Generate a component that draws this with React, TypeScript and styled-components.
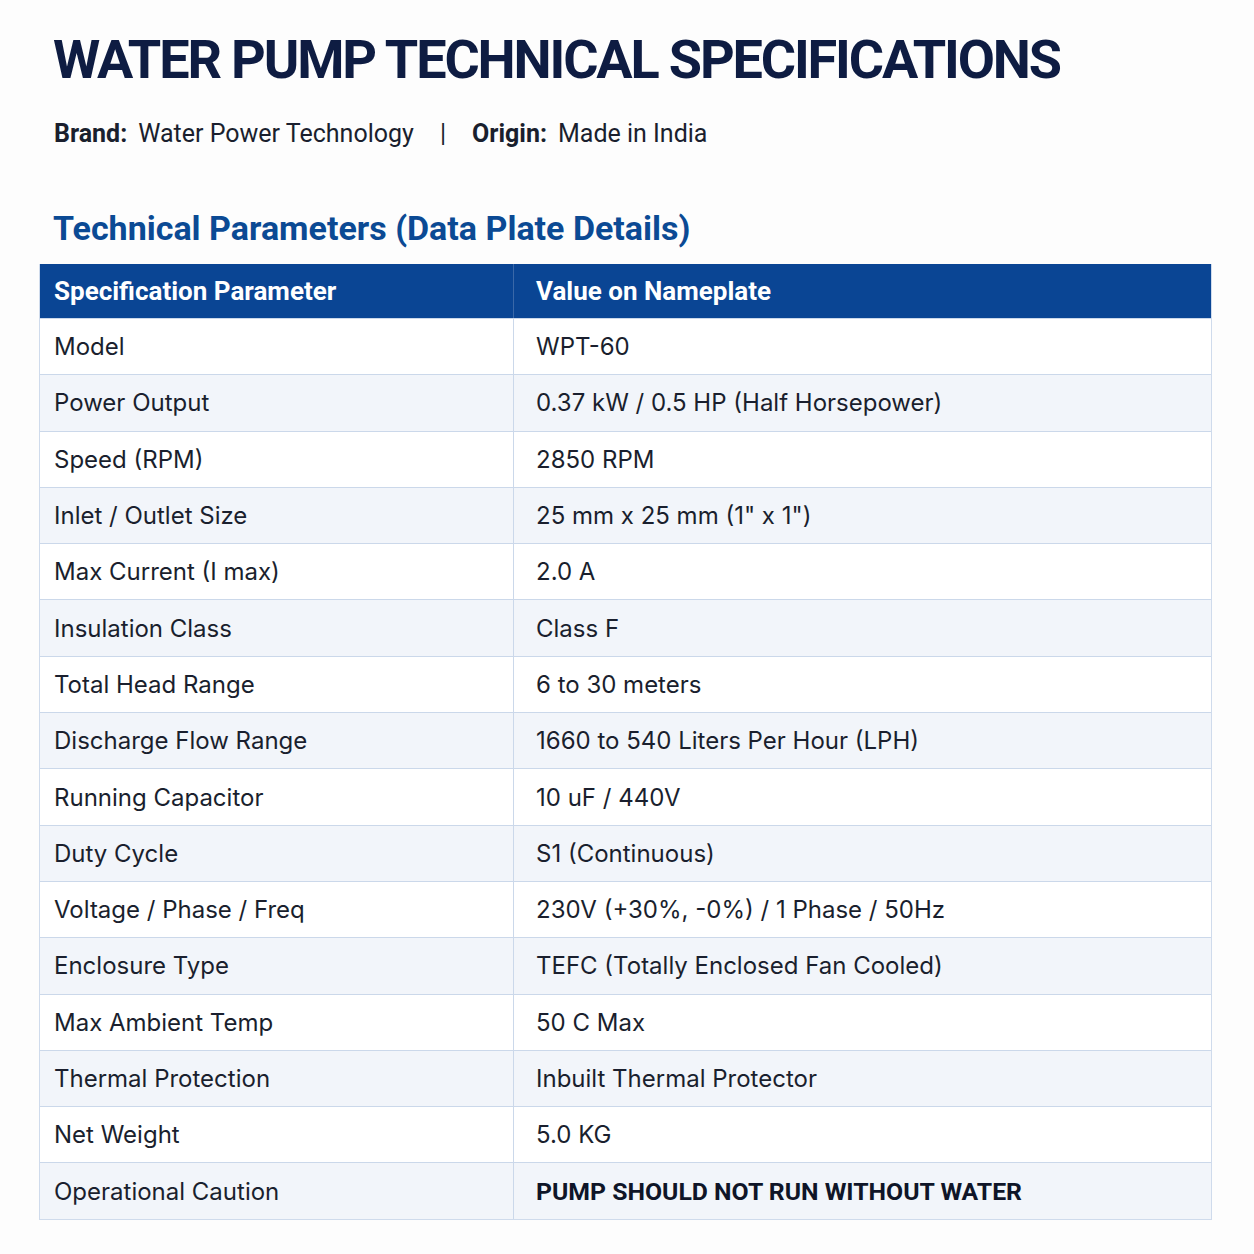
import React from 'react';
import styled, { createGlobalStyle } from 'styled-components';

const GlobalStyle = createGlobalStyle`
  html, body {
    margin: 0;
    padding: 0;
    background: #fdfdfd;
  }
`;

////////////////////// styled [START]
const Page = styled.div`
  width: 1254px;
  height: 1254px;
  box-sizing: border-box;
  padding: 28px 44px 0 39px;
  font-family: Roboto, 'Liberation Sans', sans-serif;
  color: #141a2b;
`;

const Title = styled.h1`
  margin: 0 0 0 14px;
  font-size: 54px;
  line-height: 64px;
  font-weight: 700;
  color: #0e1c42;
  letter-spacing: -2.15px;
`;

const Meta = styled.div`
  display: flex;
  align-items: center;
  margin: 26px 0 0 15px;
  font-size: 25px;
  line-height: 32px;
  color: #1a1f2e;
`;

const MetaLabel = styled.span`
  font-weight: 700;
  margin-right: 11px;
`;

const Divider = styled.span`
  margin: 0 26px;
`;

const SectionTitle = styled.h2`
  margin: 58px 0 0 14px;
  font-size: 34px;
  line-height: 40px;
  font-weight: 700;
  color: #0b4a94;
`;

const Table = styled.div`
  margin-top: 16px;
  width: 1171px;
  border: 1px solid #cfdbec;
  border-top: none;
`;

const HeadRow = styled.div`
  display: grid;
  grid-template-columns: 473px 1fr;
  height: 54px;
  background: #0a4594;
  color: #ffffff;
  font-size: 26px;
  font-weight: 700;
`;

const Row = styled.div<{ shaded: boolean }>`
  display: grid;
  grid-template-columns: 473px 1fr;
  height: 56.3px;
  box-sizing: border-box;
  border-top: 1px solid #cbd8ea;
  background: ${({ shaded }) => (shaded ? '#f2f5fa' : '#ffffff')};
  font-family: Inter, 'Noto Sans', sans-serif;
  font-size: 24px;
  color: #1a1f2e;
`;

const Cell = styled.div<{ first?: boolean; strong?: boolean }>`
  display: flex;
  align-items: center;
  padding-left: ${({ first }) => (first ? '14px' : '22px')};
  border-left: ${({ first }) => (first ? 'none' : '1px solid #cbd8ea')};
  ${({ strong }) =>
    strong &&
    `font-family: Roboto, 'Liberation Sans', sans-serif;
     font-weight: 700;
     font-size: 24.8px;
     color: #0f1528;`}
`;

const HeadCell = styled.div<{ first?: boolean }>`
  display: flex;
  align-items: center;
  padding-left: ${({ first }) => (first ? '14px' : '22px')};
  border-left: ${({ first }) => (first ? 'none' : '1px solid #3a68a8')};
`;
////////////////////// styled [END]

const specs: [string, string][] = [
  ['Model', 'WPT-60'],
  ['Power Output', '0.37 kW / 0.5 HP (Half Horsepower)'],
  ['Speed (RPM)', '2850 RPM'],
  ['Inlet / Outlet Size', '25 mm x 25 mm (1" x 1")'],
  ['Max Current (I max)', '2.0 A'],
  ['Insulation Class', 'Class F'],
  ['Total Head Range', '6 to 30 meters'],
  ['Discharge Flow Range', '1660 to 540 Liters Per Hour (LPH)'],
  ['Running Capacitor', '10 uF / 440V'],
  ['Duty Cycle', 'S1 (Continuous)'],
  ['Voltage / Phase / Freq', '230V (+30%, -0%) / 1 Phase / 50Hz'],
  ['Enclosure Type', 'TEFC (Totally Enclosed Fan Cooled)'],
  ['Max Ambient Temp', '50 C Max'],
  ['Thermal Protection', 'Inbuilt Thermal Protector'],
  ['Net Weight', '5.0 KG'],
  ['Operational Caution', 'PUMP SHOULD NOT RUN WITHOUT WATER'],
];

const App: React.FC = () => {
  return (
    <>
      <GlobalStyle />
      <Page>
        <Title>WATER PUMP TECHNICAL SPECIFICATIONS</Title>
        <Meta>
          <MetaLabel>Brand:</MetaLabel>
          <span>Water Power Technology</span>
          <Divider>|</Divider>
          <MetaLabel>Origin:</MetaLabel>
          <span>Made in India</span>
        </Meta>
        <SectionTitle>Technical Parameters (Data Plate Details)</SectionTitle>
        <Table>
          <HeadRow>
            <HeadCell first>Specification Parameter</HeadCell>
            <HeadCell>Value on Nameplate</HeadCell>
          </HeadRow>
          {specs.map(([name, value], i) => (
            <Row key={name} shaded={i % 2 === 1}>
              <Cell first>{name}</Cell>
              <Cell strong={i === specs.length - 1}>{value}</Cell>
            </Row>
          ))}
        </Table>
      </Page>
    </>
  );
};

export default App;
